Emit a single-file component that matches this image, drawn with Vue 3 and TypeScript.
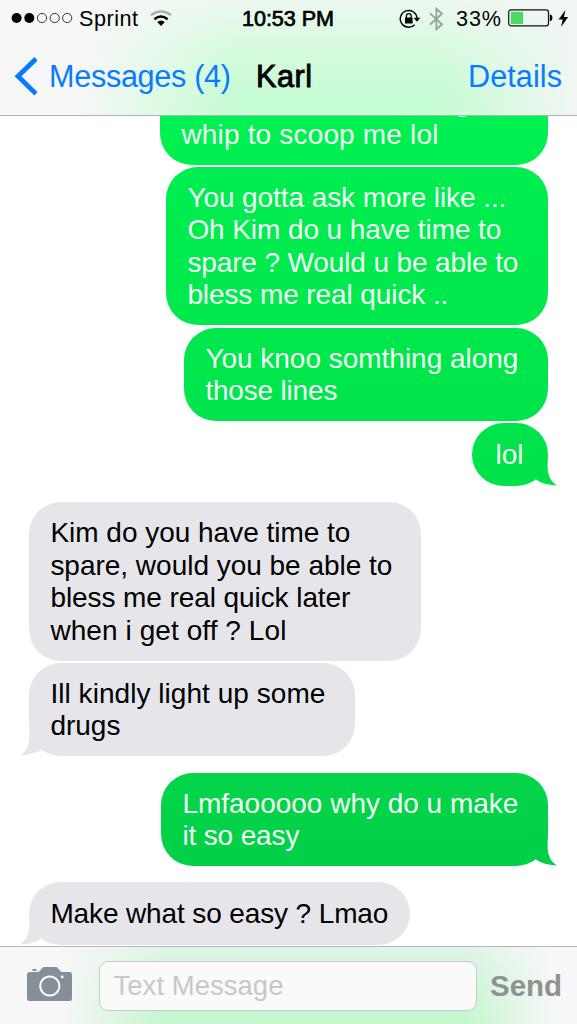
<script setup lang="ts">
interface Line {
  text: string
  width: number
}
interface Bubble {
  side: 'out' | 'in'
  width: number
  lines: Line[]
  from?: string
  to?: string
  tail?: boolean
  newGroup?: boolean
  cut?: boolean
}

const bubbles: Bubble[] = [
  {
    side: 'out', width: 388, from: '#00f152', to: '#00ef50', cut: true,
    lines: [{ text: 'g', width: 15 }, { text: 'whip to scoop me lol', width: 257 }],
  },
  {
    side: 'out', width: 382, from: '#00ee50', to: '#00e84c',
    lines: [
      { text: 'You gotta ask more like ...', width: 319 },
      { text: 'Oh Kim do u have time to', width: 314 },
      { text: 'spare ? Would u be able to', width: 331 },
      { text: 'bless me real quick ..', width: 261 },
    ],
  },
  {
    side: 'out', width: 364, from: '#00e84c', to: '#00e44b',
    lines: [
      { text: 'You knoo somthing along', width: 313 },
      { text: 'those lines', width: 132 },
    ],
  },
  {
    side: 'out', width: 76, from: '#00e44b', to: '#00e14a', tail: true,
    lines: [{ text: 'lol', width: 28 }],
  },
  {
    side: 'in', width: 392, newGroup: true,
    lines: [
      { text: 'Kim do you have time to', width: 300 },
      { text: 'spare, would you be able to', width: 342 },
      { text: 'bless me real quick later', width: 300 },
      { text: 'when i get off ? Lol', width: 236 },
    ],
  },
  {
    side: 'in', width: 326, tail: true,
    lines: [
      { text: 'Ill kindly light up some', width: 275 },
      { text: 'drugs', width: 70 },
    ],
  },
  {
    side: 'out', width: 387, from: '#03d549', to: '#02d048', tail: true, newGroup: true,
    lines: [
      { text: 'Lmfaooooo why do u make', width: 336 },
      { text: 'it so easy', width: 117 },
    ],
  },
  {
    side: 'in', width: 381, tail: true, newGroup: true,
    lines: [{ text: 'Make what so easy ? Lmao', width: 338 }],
  },
]

// Tracks a line of text so that it spans the given width.
const vFit = {
  mounted(el: HTMLElement, binding: { value: number }) {
    const count = (el.textContent ?? '').length
    if (count < 2) return
    const natural = el.getBoundingClientRect().width
    el.style.letterSpacing = `${(binding.value - natural) / (count - 1)}px`
  },
}

function bubbleStyle(b: Bubble) {
  return {
    width: `${b.width}px`,
    background: b.from ? `linear-gradient(${b.from}, ${b.to})` : '#e5e5ea',
  }
}
</script>

<template>
  <div class="phone">
    <header class="header">
      <div class="status">
        <svg class="dots" width="66" height="12" viewBox="0 0 66 12">
          <circle cx="5.6" cy="6" r="5" />
          <circle cx="18.3" cy="6" r="5" />
          <g fill="none" stroke="#222" stroke-width="0.9">
            <circle cx="31" cy="6" r="4.6" />
            <circle cx="43.7" cy="6" r="4.6" />
            <circle cx="56.2" cy="6" r="4.6" />
          </g>
        </svg>
        <div class="carrier"><span v-fit="59">Sprint</span></div>
        <svg class="wifi" width="22" height="17" viewBox="0 0 22 17">
          <path d="M1 5.2 Q11 -2.4 21 5.2" fill="none" stroke="#a4aca7" stroke-width="2.2" />
          <path d="M4.4 9.2 Q11 3.9 17.6 9.2" fill="none" stroke="#000" stroke-width="2.5" />
          <path d="M7.2 12 Q11 9 14.8 12 L11 16Z" />
        </svg>
        <div class="time"><span v-fit="92">10:53 PM</span></div>
        <svg class="lock" width="22" height="20" viewBox="0 0 22 20">
          <path d="M15.7 15.7 A8.4 8.4 0 1 1 18 9" fill="none" stroke="#000" stroke-width="1.4" />
          <path d="M14.6 8.8 H21.4 L18 12.8Z" />
          <rect x="6" y="8.4" width="7.6" height="6" rx=".5" />
          <path d="M7.4 9 V7 a2.4 2.4 0 0 1 4.8 0 V9" fill="none" stroke="#000" stroke-width="1.3" />
        </svg>
        <svg class="bluetooth" width="15" height="24" viewBox="0 0 15 24">
          <path d="M1 6.3 L13 17.3 L7.4 22.2 V1.8 L13 6.7 L1 17.7" fill="none" stroke="#93a098" stroke-width="1.8" />
        </svg>
        <div class="percent"><span v-fit="45">33%</span></div>
        <svg class="battery" width="45" height="18" viewBox="0 0 45 18">
          <rect x=".7" y=".9" width="39.8" height="16" rx="2.4" fill="none" stroke="#111" stroke-width="1.2" />
          <rect x="2.8" y="2.8" width="12.2" height="12.2" fill="#4bd863" />
          <path d="M41.8 5.6 Q44.4 6 44.4 8.9 T41.8 12.2Z" />
        </svg>
        <svg class="bolt" width="11" height="17" viewBox="0 0 11 17">
          <path d="M7.4 0 L.6 9.4 H4.8 L3 17 L10.2 7 H5.9Z" />
        </svg>
      </div>
      <nav class="nav">
        <svg class="chevron" width="24" height="40" viewBox="0 0 24 40">
          <path d="M23 1.8 L5 19.3 L23 36.8" fill="none" stroke="#087bff" stroke-width="4.8" />
        </svg>
        <div class="back"><span v-fit="182">Messages (4)</span></div>
        <div class="title"><span v-fit="56">Karl</span></div>
        <div class="details"><span v-fit="94">Details</span></div>
      </nav>
    </header>

    <main class="chat">
      <div
        v-for="(b, i) in bubbles"
        :key="i"
        :class="['bubble', b.side, { cut: b.cut, group: b.newGroup }]"
        :style="bubbleStyle(b)"
      >
        <div v-for="(l, j) in b.lines" :key="j" class="line"><span v-fit="l.width">{{ l.text }}</span></div>
        <svg v-if="b.tail" class="tail" width="32" height="32" viewBox="0 0 32 32">
          <path :fill="b.to ?? '#e5e5ea'" d="M8 0 H22.6 V13 C22.6 21 26 28 32 31.4 C25 31.4 17 29.8 11 25.6 L4 18Z" />
        </svg>
      </div>
    </main>

    <footer class="composer">
      <svg class="camera" width="46" height="35" viewBox="0 0 46 35">
        <path fill="#858e99" d="M5.5 4 V2.5 Q5.5 2 6 2 H9 Q9.5 2 9.5 2.5 V4Z M3 5 H10.5 Q12 5 13 3.8 L15 1.2 Q15.9 0 17.3 0 H28.8 Q30.2 0 31.1 1.2 L33 3.8 Q34 5 35.5 5 H42.5 Q45 5 45 7.5 V31.5 Q45 34 42.5 34 H2.5 Q0 34 0 31.5 V7.5 Q0 5 3 5Z" />
        <circle cx="22.8" cy="19" r="9.6" fill="none" stroke="#f8fcfb" stroke-width="2" />
        <circle cx="35.2" cy="10" r="1.4" fill="#f8fcfb" />
      </svg>
      <div class="field"><span v-fit="170">Text Message</span></div>
      <div class="send"><span v-fit="72">Send</span></div>
    </footer>
  </div>
</template>

<style>
body {
  margin: 0;
  background: #fff;
}
</style>

<style scoped>
.phone {
  width: 577px;
  height: 1024px;
  display: flex;
  flex-direction: column;
  overflow: hidden;
  background: #fff;
  font-family: "Liberation Sans", Arial, sans-serif;
  white-space: nowrap;
}
svg {
  display: block;
  flex: none;
}
.header {
  height: 116px;
  flex: none;
  box-sizing: border-box;
  border-bottom: 1px solid #a9b9ae;
  background:
    linear-gradient(90deg, #f7f7f7 0, #f7f7f7 80px, rgba(247, 247, 247, 0) 230px, rgba(244, 247, 245, 0) 440px, #f1f6f3 577px),
    linear-gradient(#ecf8ef 0, #d9fae1 45px, #c8fcd5 90px, #c6fcd4 115px);
}
.status {
  height: 38px;
  display: flex;
  align-items: flex-start;
  font-size: 21.6px;
  line-height: 24px;
}
.status > div {
  padding-top: 7px;
  flex: none;
}
.dots { margin: 12px 0 0 11px; }
.carrier { width: 71px; margin-left: 2px; }
.wifi { margin-top: 10px; }
.time { width: 157px; margin-left: 70px; -webkit-text-stroke: 0.7px #000; }
.lock { margin-top: 9px; }
.bluetooth { margin: 7px 0 0 8px; }
.percent { width: 52px; margin-left: 12px; }
.battery { margin-top: 9px; }
.bolt { margin: 10px 0 0 5px; }
.nav {
  height: 77px;
  display: flex;
  align-items: center;
  font-size: 30.6px;
  line-height: 34px;
  color: #087bff;
}
.nav > div { padding-bottom: 2px; }
.chevron { margin-left: 13px; }
.back { width: 207px; margin-left: 12px; }
.title { width: 212px; color: #000; -webkit-text-stroke: 0.9px #000; }
.chat {
  height: 830px;
  flex: none;
  overflow: hidden;
  display: flex;
  flex-direction: column;
}
.bubble {
  position: relative;
  box-sizing: border-box;
  flex: none;
  min-height: 63px;
  margin-top: 2.4px;
  padding: 15px 0 13.6px 21.4px;
  border-radius: 32px;
  display: flex;
  flex-direction: column;
  justify-content: center;
  font-size: 28px;
  line-height: 32.4px;
  color: #000;
}
.bubble.group { margin-top: 16.2px; }
.out {
  align-self: flex-end;
  margin-right: 29px;
  color: #f2fff6;
}
.in {
  align-self: flex-start;
  margin-left: 29px;
}
.cut {
  height: 48.6px;
  min-height: 0;
  margin-top: 0;
  padding-bottom: 13.4px;
  justify-content: flex-end;
  border-radius: 0 0 32px 32px;
  overflow: hidden;
}
.cut .line:first-child { margin-left: 273px; }
.line { height: 32.4px; flex: none; }
.bubble:nth-child(4) { padding-left: 23.5px; }
.tail {
  position: absolute;
  right: -9.4px;
  bottom: 0;
}
.in .tail {
  right: auto;
  left: -9.4px;
  transform: scaleX(-1);
}
.composer {
  height: 78px;
  flex: none;
  box-sizing: border-box;
  border-top: 1px solid #b2b9b5;
  display: flex;
  align-items: flex-start;
  background:
    linear-gradient(90deg, #f7f7f7 0, #f7f7f7 60px, rgba(247, 247, 247, 0) 165px, rgba(247, 247, 247, 0) 465px, #f7f7f7 555px),
    linear-gradient(#e0f4e7 0, #ccf6d8 35px, #c4f7cd 77px);
}
.camera { margin: 20px 0 0 27px; }
.field {
  width: 378px;
  height: 50px;
  box-sizing: border-box;
  margin: 14px 0 0 26px;
  padding-left: 13.5px;
  border: 1px solid #c5cdc8;
  border-radius: 9px;
  background: #fafafa;
  color: #c7c7cc;
  font-size: 27.5px;
  line-height: 48px;
}
.send {
  margin: 21px 0 0 13px;
  color: #8e9390;
  font-size: 29.5px;
  font-weight: bold;
  line-height: 36px;
}
</style>
